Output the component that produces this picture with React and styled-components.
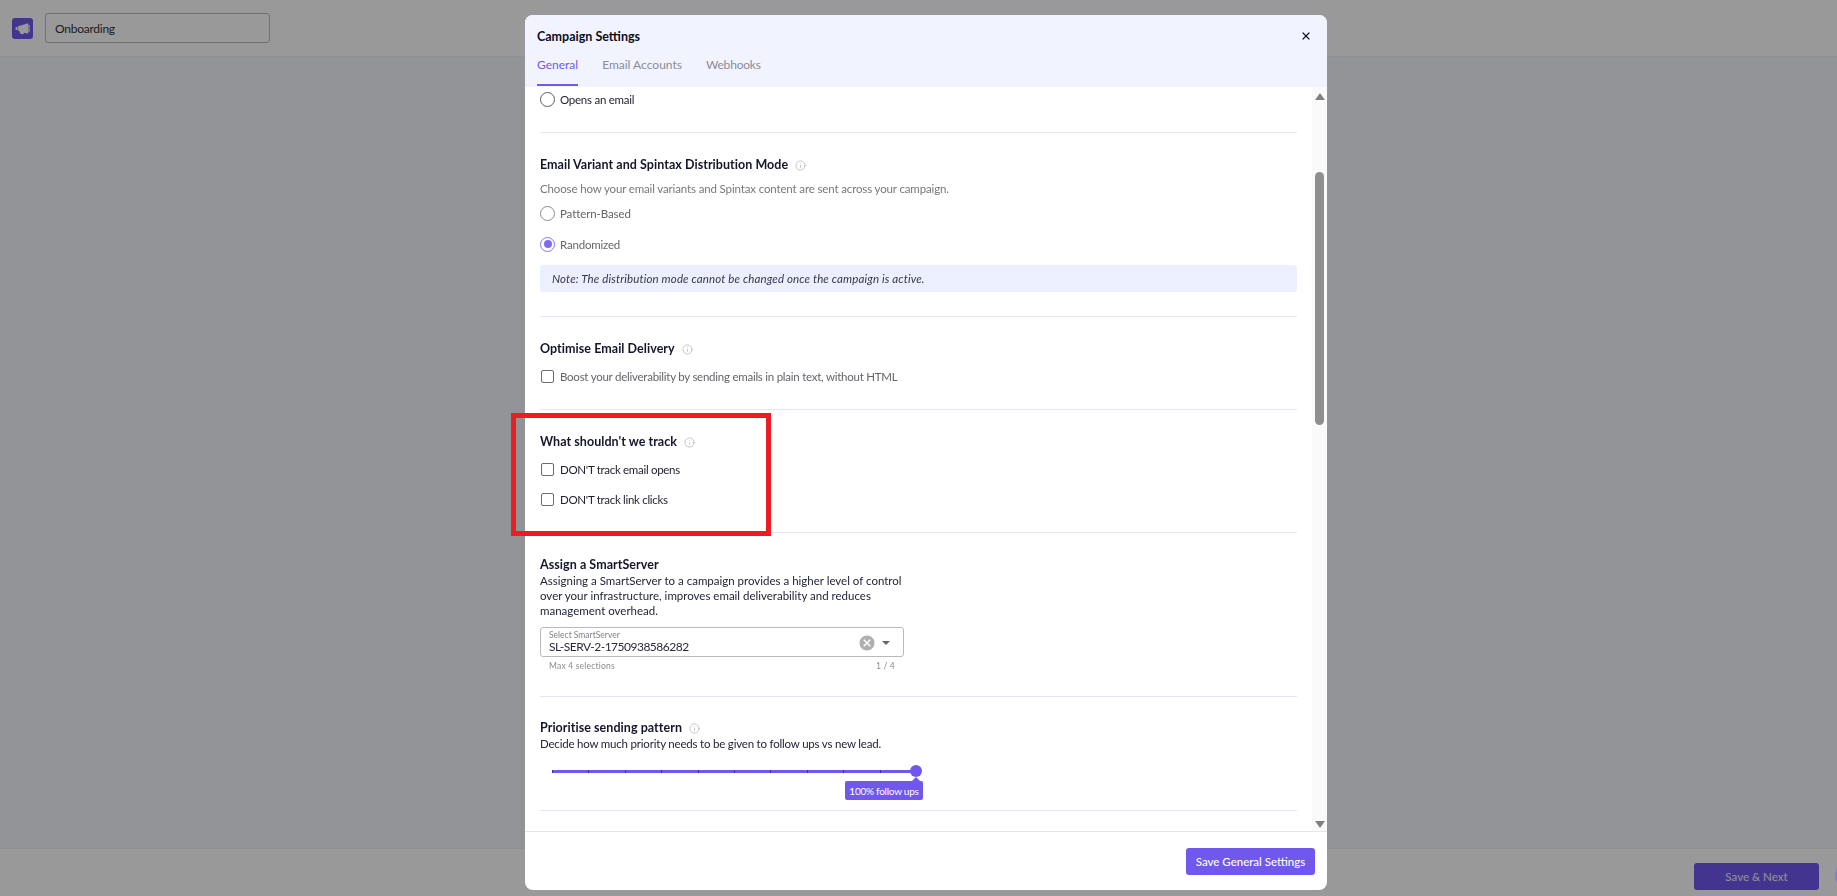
import { Info, X } from "lucide-react"
import { MdCancel } from "react-icons/md"
import styled, { createGlobalStyle } from "styled-components"

const GlobalStyle = createGlobalStyle`
    html, body {
        margin: 0;
        height: 100%;
        overflow: hidden;
        background: #f5f7fc;
        font-family: "Lato", "Liberation Sans", sans-serif;
    }
    * {
        box-sizing: border-box;
    }
`

const Page = styled.div`
    height: 896px;
    display: flex;
    flex-direction: column;
`

const TopBar = styled.header`
    height: 57px;
    background: #fff;
    display: flex;
    align-items: center;
    gap: 12px;
    padding: 0 12px;
    border-bottom: 1px solid #f0f0f0;
`

const LogoBox = styled.div`
    width: 21px;
    height: 21px;
    border-radius: 3px;
    background: #7058ee;
    display: flex;
    align-items: center;
    justify-content: center;
`

const NameInput = styled.div`
    width: 225px;
    height: 30px;
    border: 1px solid #bbb;
    border-radius: 3px;
    display: flex;
    align-items: center;
    padding: 0 9px;
    font-size: 12px;
    letter-spacing: -0.25px;
    color: #333;
`

const Main = styled.main`
    flex: 1;
`

const BottomBar = styled.footer`
    height: 48px;
    background: #fff;
    border-top: 1px solid #efeff2;
    display: flex;
    justify-content: flex-end;
    align-items: flex-start;
    padding: 14px 18px 0 0;
`

const NextButton = styled.button`
    width: 125px;
    height: 27px;
    border: 0;
    border-radius: 3px;
    background: #7058ee;
    color: #ece8ff;
    font: 500 11.5px "Lato", sans-serif;
`

const Backdrop = styled.div`
    position: fixed;
    inset: 0;
    background: rgba(0, 0, 0, 0.4);
`

const ChatBubble = styled.div`
    position: fixed;
    left: 1835px;
    top: 860px;
    width: 30px;
    height: 30px;
    border-radius: 50%;
    background: #7c7ce0;
`

const Modal = styled.section`
    position: fixed;
    left: 525px;
    top: 15px;
    width: 802px;
    height: 875px;
    background: #fff;
    border-radius: 8px;
    overflow: hidden;
    display: flex;
    flex-direction: column;
`

const ModalHead = styled.div`
    height: 72px;
    background: #f1f4ff;
    padding: 0 12px;
    position: relative;
`

const ModalTitle = styled.h2`
    margin: 0;
    padding-top: 13px;
    font-size: 12.5px;
    line-height: 18px;
    font-weight: 700;
    color: #0c0c20;
`

const CloseButton = styled.span`
    position: absolute;
    right: 15px;
    top: 15px;
    color: #15152c;
    display: flex;
`

const Tabs = styled.nav`
    display: flex;
    gap: 24px;
    margin-top: 10px;
`

const Tab = styled.span`
    height: 30px;
    font-size: 12px;
    line-height: 17px;
    letter-spacing: ${(p) => p.$ls || 0}px;
    color: ${(p) => (p.$active ? "#7058ee" : "#8b8b99")};
    border-bottom: ${(p) => (p.$active ? "2px solid #7058ee" : "none")};
`

const ModalBody = styled.div`
    height: 744px;
    display: flex;
    overflow: hidden;
`

const Content = styled.div`
    width: 787px;
    padding: 0 15px;
    flex-shrink: 0;
`

const Section = styled.div`
    padding: ${(p) => p.$top}px 0 ${(p) => p.$bottom}px;
    border-bottom: 1px solid #e6e6f0;
`

const SectionTitle = styled.div`
    display: flex;
    align-items: center;
    gap: 7px;
    font-size: 12.5px;
    line-height: 18px;
    font-weight: 700;
    letter-spacing: 0.05px;
    color: #15152c;
    svg {
        color: #a8a8ae;
    }
`

const Description = styled.p`
    margin: ${(p) => p.$mt || 0}px 0 0;
    font-size: 11.5px;
    line-height: ${(p) => p.$lh || 15}px;
    letter-spacing: ${(p) => p.$ls || 0}px;
    color: ${(p) => (p.$muted ? "#77777f" : "#24243a")};
    max-width: ${(p) => p.$maxw || "none"};
`

const OptionRow = styled.label`
    height: 24px;
    margin-top: ${(p) => p.$mt || 0}px;
    display: flex;
    align-items: center;
    gap: 5px;
    font-size: 11.5px;
    letter-spacing: ${(p) => p.$ls || 0}px;
    color: ${(p) => (p.$muted ? "#64646c" : "#1e1e2e")};
`

const RadioMark = styled.span`
    width: 15px;
    height: 15px;
    border-radius: 50%;
    border: 1.5px solid ${(p) => (p.$checked ? "#8a76f3" : p.$muted ? "#8c8c8c" : "#5d5d5d")};
    display: flex;
    align-items: center;
    justify-content: center;
    &::after {
        content: "";
        width: 8px;
        height: 8px;
        border-radius: 50%;
        background: ${(p) => (p.$checked ? "#7f6bf2" : "transparent")};
    }
`

const CheckMark = styled.span`
    width: 13px;
    height: 13px;
    margin: 0 1px 0 1px;
    border: 1px solid #6c6c6c;
    border-radius: 2px;
`

const Note = styled.div`
    height: 27px;
    margin-top: 9px;
    background: #eceffd;
    border-radius: 3px;
    padding: 0 12px;
    display: flex;
    align-items: center;
    font-size: 11.5px;
    font-style: italic;
    letter-spacing: 0.13px;
    color: #37374f;
`

const SelectBox = styled.div`
    width: 364px;
    height: 30px;
    margin-top: 9px;
    border: 1px solid #b9b9b9;
    border-radius: 3px;
    padding: 3px 13px 0 8px;
    display: flex;
    justify-content: space-between;
`

const SelectLabel = styled.div`
    font-size: 8.5px;
    line-height: 9px;
    color: #80808a;
`

const SelectValue = styled.div`
    font-size: 12px;
    line-height: 14px;
    letter-spacing: -0.5px;
    color: #2a2a3a;
`

const SelectIcons = styled.div`
    display: flex;
    align-items: center;
    gap: 6px;
    height: 24px;
    color: #b0b0b0;
`

const Caret = styled.span`
    width: 0;
    height: 0;
    border-left: 4.5px solid transparent;
    border-right: 4.5px solid transparent;
    border-top: 4.5px solid #666;
`

const HelperRow = styled.div`
    width: 364px;
    margin-top: 3px;
    padding: 0 9px;
    display: flex;
    justify-content: space-between;
    font-size: 8.5px;
    line-height: 12px;
    letter-spacing: 0.2px;
    color: #8a8a92;
`

const SliderTrack = styled.div`
    position: relative;
    width: 364px;
    height: 3px;
    margin: 19px 0 0 12px;
    background: #7058ee;
    display: flex;
    justify-content: space-between;
    align-items: center;
`

const Tick = styled.span`
    width: 1px;
    height: 3px;
    background: #3d2fa0;
`

const SliderThumb = styled.span`
    position: absolute;
    right: -6px;
    top: -5px;
    width: 12px;
    height: 12px;
    border-radius: 50%;
    background: #7058ee;
`

const SliderTip = styled.span`
    position: absolute;
    right: -7px;
    top: 11px;
    width: 78px;
    height: 19px;
    border-radius: 2px;
    background: #7058ee;
    color: #fff;
    font-size: 10px;
    letter-spacing: -0.25px;
    display: flex;
    align-items: center;
    justify-content: center;
    white-space: nowrap;
    &::before {
        content: "";
        position: absolute;
        top: -4px;
        right: 3px;
        border-left: 4px solid transparent;
        border-right: 4px solid transparent;
        border-bottom: 4px solid #7058ee;
    }
`

const ScrollRail = styled.div`
    width: 15px;
    background: #fafafa;
    display: flex;
    flex-direction: column;
    align-items: center;
    padding-top: 6px;
`

const ScrollArrow = styled.span`
    width: 0;
    height: 0;
    border-left: 5px solid transparent;
    border-right: 5px solid transparent;
    border-top: ${(p) => (p.$down ? "7px solid #808080" : "none")};
    border-bottom: ${(p) => (p.$down ? "none" : "7px solid #808080")};
    margin-top: ${(p) => (p.$down ? "auto" : 0)};
    margin-bottom: ${(p) => (p.$down ? "3px" : 0)};
`

const ScrollThumb = styled.span`
    width: 9px;
    height: 253px;
    margin-top: 72px;
    border-radius: 5px;
    background: #8f8f8f;
`

const ModalFoot = styled.div`
    flex: 1;
    border-top: 1px solid #e6e6ea;
    display: flex;
    justify-content: flex-end;
    padding: 16px 12px 0 0;
`

const SaveButton = styled.button`
    width: 129px;
    height: 27px;
    border: 0;
    border-radius: 3px;
    background: #7058ee;
    color: #fff;
    font: 500 11.5px "Lato", sans-serif;
`

// annotation drawn on top of the screenshot
const RedMark = styled.div`
    position: fixed;
    left: 511px;
    top: 413px;
    width: 260px;
    height: 123px;
    border: 5px solid #ea1c24;
`

const InfoIcon = () => <Info size={11} strokeWidth={1.4} />

const Megaphone = () => (
    <svg width="15" height="15" viewBox="0 0 24 24" fill="#fff">
        <path d="M1 9.5h3v5H1z" />
        <path d="M5 8.5l16-5v17l-6-1.9a4 4 0 0 1-7.6-2.4L5 15.5z" />
        <rect x="21.5" y="6" width="1.8" height="12" rx="0.9" />
    </svg>
)

const App = () => {
    const ticks = Array.from({ length: 10 })

    return (
        <>
            <GlobalStyle />
            <Page>
                <TopBar>
                    <LogoBox>
                        <Megaphone />
                    </LogoBox>
                    <NameInput>Onboarding</NameInput>
                </TopBar>
                <Main />
                <BottomBar>
                    <NextButton>Save &amp; Next</NextButton>
                </BottomBar>
            </Page>
            <Backdrop />
            <ChatBubble />
            <Modal>
                <ModalHead>
                    <ModalTitle>Campaign Settings</ModalTitle>
                    <CloseButton>
                        <X size={12} strokeWidth={2.4} />
                    </CloseButton>
                    <Tabs>
                        <Tab $active>General</Tab>
                        <Tab>Email Accounts</Tab>
                        <Tab $ls={-0.2}>Webhooks</Tab>
                    </Tabs>
                </ModalHead>
                <ModalBody>
                    <Content>
                        <Section $top={0} $bottom={21}>
                            <OptionRow $ls={-0.25}>
                                <RadioMark />
                                Opens an email
                            </OptionRow>
                        </Section>
                        <Section $top={23} $bottom={24}>
                            <SectionTitle>
                                Email Variant and Spintax Distribution Mode <InfoIcon />
                            </SectionTitle>
                            <Description $muted $mt={7} $lh={16} $ls={-0.14}>
                                Choose how your email variants and Spintax content are sent across your campaign.
                            </Description>
                            <OptionRow $muted $mt={4} $ls={-0.1}>
                                <RadioMark $muted />
                                Pattern-Based
                            </OptionRow>
                            <OptionRow $muted $mt={7} $ls={-0.2}>
                                <RadioMark $checked />
                                Randomized
                            </OptionRow>
                            <Note>Note: The distribution mode cannot be changed once the campaign is active.</Note>
                        </Section>
                        <Section $top={23} $bottom={21}>
                            <SectionTitle>
                                Optimise Email Delivery <InfoIcon />
                            </SectionTitle>
                            <OptionRow $muted $mt={6} $ls={-0.25}>
                                <CheckMark />
                                Boost your deliverability by sending emails in plain text, without HTML
                            </OptionRow>
                        </Section>
                        <Section $top={23} $bottom={21}>
                            <SectionTitle>
                                What shouldn't we track <InfoIcon />
                            </SectionTitle>
                            <OptionRow $mt={6} $ls={-0.3}>
                                <CheckMark />
                                DON'T track email opens
                            </OptionRow>
                            <OptionRow $mt={6} $ls={-0.3}>
                                <CheckMark />
                                DON'T track link clicks
                            </OptionRow>
                        </Section>
                        <Section $top={23} $bottom={24}>
                            <SectionTitle>Assign a SmartServer</SectionTitle>
                            <Description $maxw="364px" $mt={-1}>
                                Assigning a SmartServer to a campaign provides a higher level of control over your
                                infrastructure, improves email deliverability and reduces management overhead.
                            </Description>
                            <SelectBox>
                                <div>
                                    <SelectLabel>Select SmartServer</SelectLabel>
                                    <SelectValue>SL-SERV-2-1750938586282</SelectValue>
                                </div>
                                <SelectIcons>
                                    <MdCancel size={18} />
                                    <Caret />
                                </SelectIcons>
                            </SelectBox>
                            <HelperRow>
                                <span>Max 4 selections</span>
                                <span>1 / 4</span>
                            </HelperRow>
                        </Section>
                        <Section $top={22} $bottom={37}>
                            <SectionTitle>
                                Prioritise sending pattern <InfoIcon />
                            </SectionTitle>
                            <Description $mt={-1} $ls={-0.2}>
                                Decide how much priority needs to be given to follow ups vs new lead.
                            </Description>
                            <SliderTrack>
                                {ticks.map((_, i) => (
                                    <Tick key={i} />
                                ))}
                                <span />
                                <SliderThumb />
                                <SliderTip>100% follow ups</SliderTip>
                            </SliderTrack>
                        </Section>
                    </Content>
                    <ScrollRail>
                        <ScrollArrow />
                        <ScrollThumb />
                        <ScrollArrow $down />
                    </ScrollRail>
                </ModalBody>
                <ModalFoot>
                    <SaveButton>Save General Settings</SaveButton>
                </ModalFoot>
            </Modal>
            <RedMark />
        </>
    )
}

export default App
